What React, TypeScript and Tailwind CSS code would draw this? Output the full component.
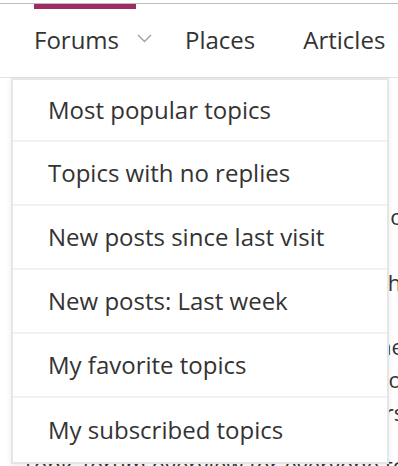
const items = [
  "Most popular topics",
  "Topics with no replies",
  "New posts since last visit",
  "New posts: Last week",
  "My favorite topics",
  "My subscribed topics",
];

function Chevron() {
  return (
    <svg width="15" height="9" viewBox="0 0 15 9" className="ml-[18px] mt-[-4px]" fill="none">
      <polyline points="1,1 7.5,7.5 14,1" stroke="#a0a0a0" strokeWidth="1.4" />
    </svg>
  );
}

export default function App() {
  return (
    <div
      className="relative h-[466px] w-[398px] overflow-hidden bg-white text-[#333]"
      style={{ fontFamily: '"Open Sans", sans-serif' }}
    >
      <div className="h-[3px] bg-white" />
      <div className="h-px bg-[#bdbdbd]" />
      <nav className="relative h-[74px] border-b border-[#e2e2e2] bg-white">
        <div className="absolute left-[34px] top-0 h-[5px] w-[102px] bg-[#9c2c62]" />
        <ul className="flex items-center pl-[34px] pt-[19px] text-[24px] leading-[34px] whitespace-nowrap">
          <li className="flex items-center">
            Forums
            <Chevron />
          </li>
          <li className="ml-[33px]">Places</li>
          <li className="ml-[48px]">Articles</li>
        </ul>
      </nav>

      <div className="pl-[22px] pt-[122px] text-[22px] leading-[33px] whitespace-nowrap">
        <p>Welcome to the community discussion forums</p>
        <p className="mt-[33px]">Find answers and share ideas with the team</p>
        <p className="mt-[31px]">Browse the latest topics here and there</p>
        <p>Join the conversation now and help out</p>
        <p>Ask a question and get great answers</p>
        <p className="mt-[20px]">Topic forum overview for everyone to read</p>
      </div>

      <div className="absolute left-[11px] top-[78px] w-[378px] border-2 border-[#e6e6e6] bg-white shadow-[0_2px_6px_rgba(0,0,0,0.08)]">
        <ul className="divide-y-2 divide-[#f1f1f1]">
          {items.map((item) => (
            <li
              key={item}
              className="flex h-[64px] items-center pl-[35px] text-[24px] whitespace-nowrap first:h-[62px]"
            >
              {item}
            </li>
          ))}
        </ul>
      </div>
    </div>
  );
}
